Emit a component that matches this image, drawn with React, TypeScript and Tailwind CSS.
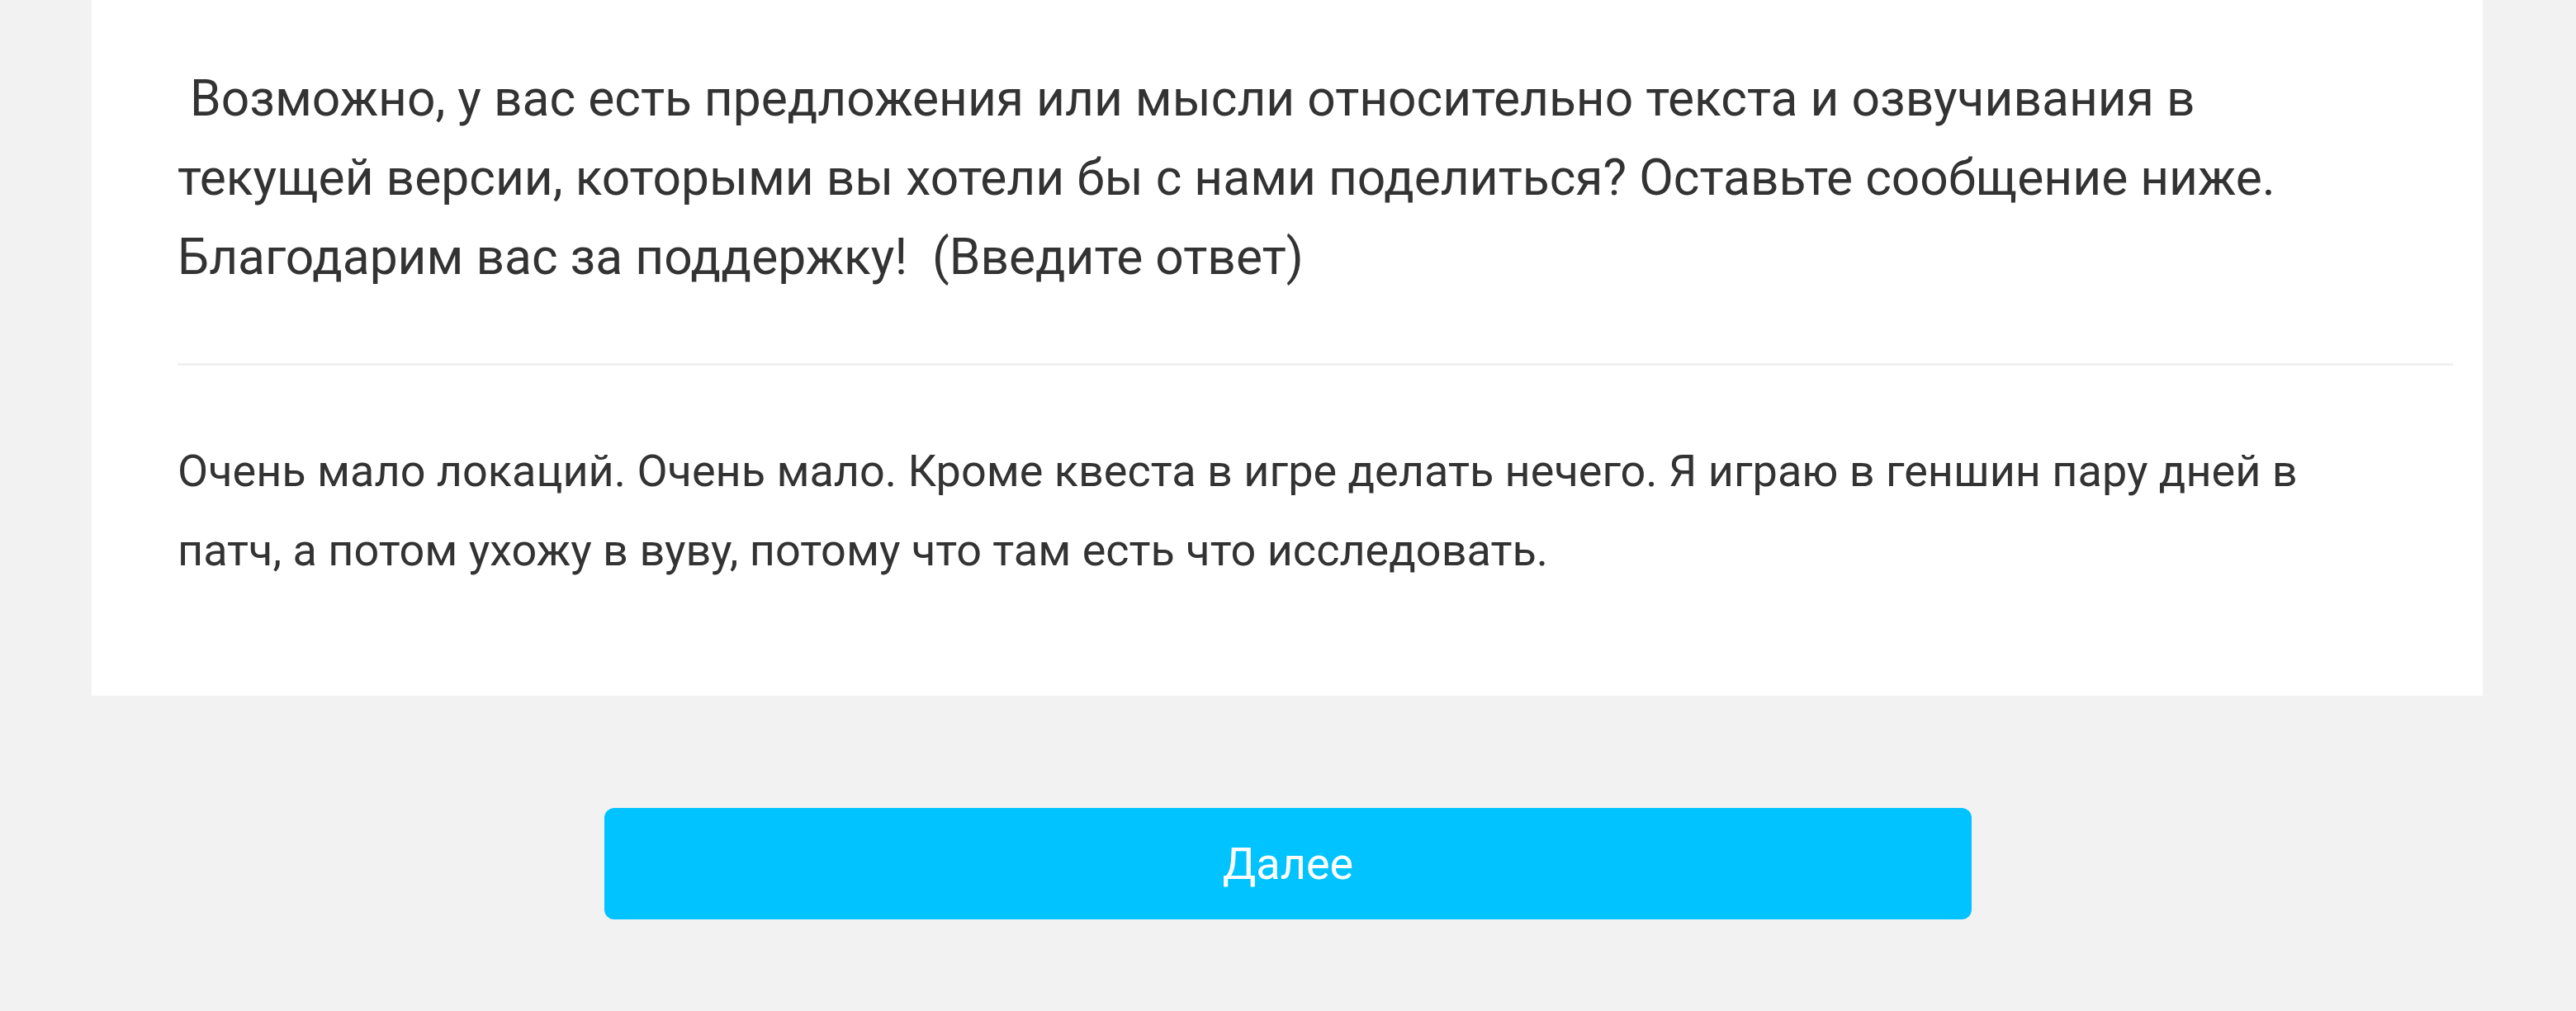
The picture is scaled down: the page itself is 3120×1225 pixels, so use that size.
export default function App() {
  return (
    <div className="min-h-[1225px] w-full bg-[#f2f2f2] font-['Roboto','Liberation_Sans',sans-serif] text-[#333333]">
      <div className="ml-[111px] w-[2896px] bg-white pt-[72px] pb-[128px] pl-[104px]">
        <div className="w-[2600px] text-[60.5px] leading-[96px]">
          &nbsp;Возможно, у вас есть предложения или мысли относительно текста и озвучивания в текущей версии, которыми вы хотели бы с нами поделиться? Оставьте сообщение ниже. Благодарим вас за поддержку!&nbsp; (Введите ответ)
        </div>
        <div className="mt-[80px] h-[3px] w-[2756px] bg-[#f0f0f0]" />
        <div className="mt-[80px] w-[2600px] text-[54px] leading-[96px]">
          Очень мало локаций. Очень мало. Кроме квеста в игре делать нечего. Я играю в геншин пару дней в патч, а потом ухожу в вуву, потому что там есть что исследовать.
        </div>
      </div>
      <div className="flex justify-center pt-[136px]">
        <button className="flex h-[135px] w-[1656px] items-center justify-center rounded-[12px] bg-[#00c3ff] text-[54px] text-white">
          Далее
        </button>
      </div>
    </div>
  );
}
